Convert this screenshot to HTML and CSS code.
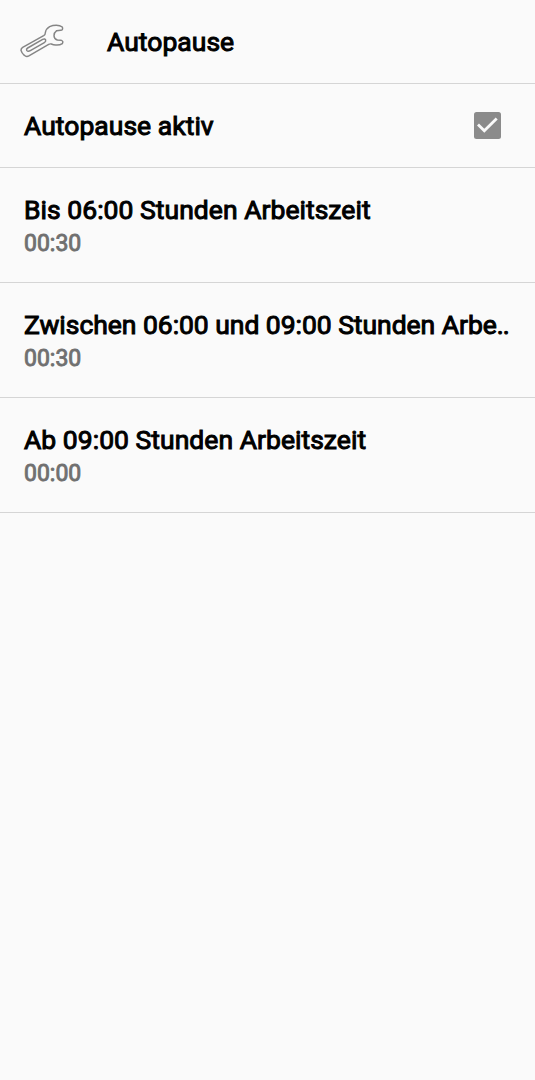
FILE: index.html
```html
<!DOCTYPE html>
<html lang="de">
<head>
    <meta charset="UTF-8">
    <meta name="viewport" content="width=device-width, initial-scale=1.0">
    <title>Autopause</title>
    <link rel="stylesheet" href="styles.css">
</head>
<body>
    <header class="header">
        <svg class="wrench" viewBox="0 0 195 165" aria-hidden="true">
            <path d="M38 97 L101 62 Q106 59 106 53 Q108 41 119 35 Q128 31 139 31 Q150 31 157 36 Q160 46 152 46 L140 47 Q132 53 132 62 Q132 71 142 75 L154 76 Q161 78 157 86 Q149 91 137 90 Q130 90 124 87 Q120 86 116 88 L58 122 Q49 127 43 121 Q35 114 33 106 Q33 100 38 97 Z"/>
            <path d="M53 99 L98 73 Q105 70 107 75 Q108 80 103 83 L61 107 Q54 111 50 106 Q48 102 53 99 Z"/>
        </svg>
        <h1 class="title">Autopause</h1>
    </header>

    <main class="settings">
        <label class="row row-check">
            <span class="title">Autopause aktiv</span>
            <input type="checkbox" class="check-input" checked>
            <svg class="checkbox" viewBox="0 0 27 27" aria-hidden="true">
                <rect width="27" height="27" rx="2.5"/>
                <path d="M4 12.5 L10.3 18.8 L22.7 6.4"/>
            </svg>
        </label>
        <div class="row">
            <div class="title">Bis 06:00 Stunden Arbeitszeit</div>
            <div class="value">00:30</div>
        </div>
        <div class="row">
            <div class="title title-long">Zwischen 06:00 und 09:00 Stunden Arbe<span class="dots">..</span></div>
            <div class="value">00:30</div>
        </div>
        <div class="row">
            <div class="title">Ab 09:00 Stunden Arbeitszeit</div>
            <div class="value">00:00</div>
        </div>
    </main>
</body>
</html>
```
FILE: styles.css
```css
* {
    margin: 0;
    padding: 0;
    box-sizing: border-box;
}
body {
    min-height: 100vh;
    font-family: Roboto, sans-serif;
    background: #fafafa;
    color: #000;
}
.header {
    display: flex;
    align-items: center;
    height: 84px;
    padding: 2px 0 0 10px;
    border-bottom: 1px solid #d5d5d5;
}
.header .title {
    margin-bottom: 2px;
}
.wrench {
    width: 65px;
    height: 55px;
    margin-right: 32px;
    fill: none;
    stroke: #858585;
    stroke-width: 4.4;
    stroke-linejoin: round;
}
.title {
    font-size: 26.5px;
    font-weight: 400;
    line-height: 32px;
    letter-spacing: 0.03px;
    white-space: nowrap;
    -webkit-text-stroke: 1px currentColor;
}
.title-long {
    letter-spacing: -0.04px;
}
.dots {
    letter-spacing: -1px;
}
.row {
    height: 115px;
    padding: 26px 24px 0;
    border-bottom: 1px solid #d5d5d5;
}
.row-check {
    display: flex;
    align-items: center;
    justify-content: space-between;
    height: 84px;
    padding: 0 34px 0 24px;
}
.check-input {
    display: none;
}
.checkbox {
    width: 27px;
    height: 27px;
}
.checkbox rect {
    fill: #8b8b8b;
}
.checkbox path {
    fill: none;
    stroke: #fafafa;
    stroke-width: 2.8;
}
.value {
    font-size: 23px;
    line-height: 36px;
    color: #707070;
    -webkit-text-stroke: 0.9px currentColor;
}
```
